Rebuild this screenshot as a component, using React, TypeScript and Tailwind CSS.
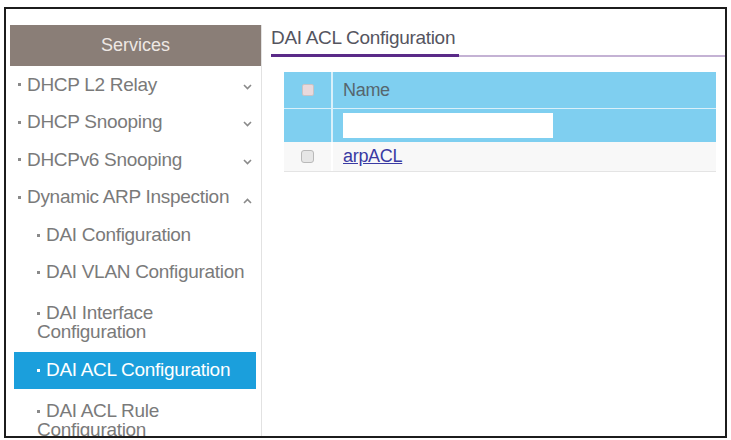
import React from "react";

const font = { fontFamily: '"Liberation Sans", Arial, sans-serif' };

function Dot({ light }: { light?: boolean }) {
  return (
    <span
      className={`inline-block w-[3px] h-[3px] align-middle mr-[6px] ${light ? "bg-white" : "bg-[#8a8a8a]"}`}
    />
  );
}

function ChevronDown() {
  return (
    <svg width="9" height="6" viewBox="0 0 9 6" className="shrink-0">
      <path d="M1 1 L4.5 4.5 L8 1" fill="none" stroke="#8a8a8a" strokeWidth="1.6" />
    </svg>
  );
}
function ChevronUp() {
  return (
    <svg width="9" height="6" viewBox="0 0 9 6" className="shrink-0">
      <path d="M1 5 L4.5 1.5 L8 5" fill="none" stroke="#8a8a8a" strokeWidth="1.6" />
    </svg>
  );
}

function TopItem({ label, open }: { label: string; open?: boolean }) {
  return (
    <div className="h-[37.5px] flex items-center pl-[8px] pr-[9px] text-[19px] tracking-[-0.3px] text-[#7a7a7a]">
      <Dot />
      <span className="flex-1 whitespace-nowrap">{label}</span>
      <span className={open ? "mt-[8px]" : "mt-[4px]"}>{open ? <ChevronUp /> : <ChevronDown />}</span>
    </div>
  );
}

function SubItem({ children, two }: { children: React.ReactNode; two?: boolean }) {
  return (
    <div
      className={`${two ? "h-[61px] leading-[19px]" : "h-[37.5px]"} flex items-center pl-[27px] text-[19px] tracking-[-0.3px] text-[#7a7a7a] whitespace-nowrap`}
    >
      <div>{children}</div>
    </div>
  );
}

export default function App() {
  return (
    <div className="w-[731px] h-[440px] bg-white overflow-hidden pl-[4px] pt-[7px]" style={font}>
      <div className="w-[723px] h-[431px] border-2 border-[#1c1c1c] overflow-hidden flex">
        {/* Sidebar */}
        <div className="ml-[4px] mt-[16px] w-[252px] border-r border-[#e2e2e2] shrink-0">
          <div className="h-[41px] bg-[#8a7e77] flex items-center justify-center text-[18px] text-[#eee8e4]">
            Services
          </div>
          <TopItem label="DHCP L2 Relay" />
          <TopItem label="DHCP Snooping" />
          <TopItem label="DHCPv6 Snooping" />
          <TopItem label="Dynamic ARP Inspection" open />
          <SubItem>
            <Dot />DAI Configuration
          </SubItem>
          <SubItem>
            <Dot />DAI VLAN Configuration
          </SubItem>
          <SubItem two>
            <Dot />DAI Interface
            <br />
            Configuration
          </SubItem>
          <div className="h-[37px] mx-[4px] mr-[5px] bg-[#1b9fdc] flex items-center pl-[23px] text-[19px] tracking-[-0.3px] text-white whitespace-nowrap">
            <Dot light />DAI ACL Configuration
          </div>
          <SubItem two>
            <Dot />DAI ACL Rule
            <br />
            Configuration
          </SubItem>
        </div>

        {/* Main */}
        <div className="flex-1 pt-[18px] pl-[9px]">
          <div className="h-[22px] leading-[22px] text-[19px] tracking-[-0.3px] text-[#55555f]">
            DAI ACL Configuration
          </div>
          <div className="mt-[4px] h-[4px] flex items-end">
            <div className="w-[188px] h-[3px] bg-[#5a2a88]" />
            <div className="flex-1 h-[2px] bg-[#c4b2d4]" />
          </div>

          <div className="mt-[15px] ml-[13px] w-[432px]">
            {/* Header */}
            <div className="h-[36px] flex bg-[#7fcff0]">
              <div className="w-[47px] flex items-center justify-center">
                <span className="w-[12px] h-[12px] rounded-[2px] bg-[#e9d9dc] border border-[#c9c2c4]" />
              </div>
              <div className="w-[2px] bg-[#d9f0fa]" />
              <div className="flex-1 flex items-center pl-[10px] text-[18px] tracking-[-0.3px] text-[#56666e]">
                Name
              </div>
            </div>
            <div className="h-[1px] bg-[#d9f0fa]" />
            {/* Filter row */}
            <div className="h-[33px] flex bg-[#7fcff0]">
              <div className="w-[47px]" />
              <div className="w-[2px] bg-[#d9f0fa]" />
              <div className="flex-1 flex items-center pl-[10px]">
                <div className="w-[210px] h-[25px] bg-white" />
              </div>
            </div>
            {/* Data row */}
            <div className="h-[30px] flex bg-[#f8f8f8] border-b border-[#e4e4e4]">
              <div className="w-[47px] flex items-center justify-center">
                <span className="w-[13px] h-[13px] rounded-[3px] bg-[#e6e6e6] border border-[#b9b9b9]" />
              </div>
              <div className="w-[2px] bg-white" />
              <div className="flex-1 flex items-center pl-[10px] text-[18px] tracking-[-0.3px]">
                <a className="text-[#3a3aa3] underline">arpACL</a>
              </div>
            </div>
          </div>
        </div>
      </div>
    </div>
  );
}
